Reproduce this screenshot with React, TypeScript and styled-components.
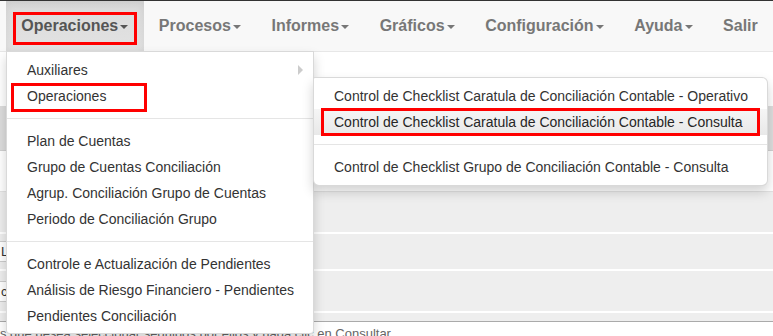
import React from "react";
import styled, { createGlobalStyle, css } from "styled-components";

const GlobalStyle = createGlobalStyle`
  html, body { margin: 0; padding: 0; background: #fff; }
  body { font-family: "Liberation Sans", Arial, sans-serif; overflow: hidden; }
  * { box-sizing: border-box; }
  ul { margin: 0; padding: 0; list-style: none; }
`;

const Page = styled.div`
  position: relative;
  width: 773px;
  height: 336px;
  overflow: hidden;
`;

const Navbar = styled.nav`
  position: relative;
  z-index: 10;
  display: flex;
  height: 52px;
  padding-left: 6px;
  background: #f8f8f8;
  border-top: 1px solid #333;
  border-bottom: 1px solid #e7e7e7;
`;

const NavList = styled.ul`
  display: flex;
`;

const NavItem = styled.li`
  position: relative;
`;

const NavLink = styled.a<{ $active?: boolean }>`
  display: flex;
  align-items: center;
  height: 50px;
  padding: 0 15.3px;
  font-size: 16px;
  font-weight: bold;
  color: #777;
  text-decoration: none;
  white-space: nowrap;
  ${(p) =>
    p.$active &&
    css`
      color: #555;
      background: linear-gradient(to bottom, #dbdbdb 0%, #e2e2e2 100%);
      box-shadow: inset 0 3px 9px rgba(0, 0, 0, 0.075);
    `}
`;

const Caret = styled.span`
  display: inline-block;
  width: 0;
  height: 0;
  margin-left: 2px;
  margin-top: 2px;
  border-top: 4px solid currentColor;
  border-left: 4px solid transparent;
  border-right: 4px solid transparent;
`;

const RedBox = styled.span<{ $l: number; $t: number; $w: number; $h: number }>`
  position: absolute;
  left: ${(p) => p.$l}px;
  top: ${(p) => p.$t}px;
  width: ${(p) => p.$w}px;
  height: ${(p) => p.$h}px;
  border: 3px solid #f00;
  pointer-events: none;
  z-index: 5;
`;

const Menu = styled.ul`
  position: absolute;
  top: 100%;
  left: 0;
  width: 308px;
  padding: 5px 0 4px;
  background: #fff;
  border: 1px solid rgba(0, 0, 0, 0.15);
  border-radius: 0 0 4px 4px;
  box-shadow: 0 6px 12px rgba(0, 0, 0, 0.175);
`;

const SubMenu = styled.ul`
  position: absolute;
  top: -6px;
  left: 100%;
  width: 455px;
  padding: 5px 0;
  background: #fff;
  border: 1px solid rgba(0, 0, 0, 0.15);
  border-radius: 2px 6px 6px 6px;
  box-shadow: 0 6px 12px rgba(0, 0, 0, 0.175);
`;

const MenuItem = styled.li`
  position: relative;
`;

const MenuLink = styled.a<{ $hl?: boolean }>`
  display: flex;
  align-items: center;
  justify-content: space-between;
  padding: 3px 20px;
  line-height: 20px;
  font-size: 14px;
  color: #333;
  white-space: nowrap;
  text-decoration: none;
  ${(p) =>
    p.$hl &&
    css`
      background: linear-gradient(to bottom, #f5f5f5 0%, #e8e8e8 100%);
      color: #262626;
    `}
`;

const SubArrow = styled.span<{ $hidden?: boolean }>`
  width: 0;
  height: 0;
  margin-right: -10px;
  border-top: 5px solid transparent;
  border-bottom: 5px solid transparent;
  border-left: 5px solid ${(p) => (p.$hidden ? "#fff" : "#ccc")};
`;

const Divider = styled.li`
  height: 1px;
  margin: 9px 0;
  background: #e5e5e5;
`;

const Content = styled.main`
  display: flex;
  flex-direction: column;
`;

const Blank = styled.div<{ $h: number }>`
  height: ${(p) => p.$h}px;
  background: #fff;
`;

const Band = styled.div`
  height: 45px;
  background: #dddddd;
  border-bottom: 1px solid #d0d0d0;
`;

const Rows = styled.div`
  display: flex;
  flex-direction: column;
  gap: 2px;
  border-top: 1px solid #e2e2e2;
  border-bottom: 1px solid #aaa;
`;

const Row = styled.div<{ $h: number }>`
  display: flex;
  align-items: center;
  height: ${(p) => p.$h}px;
  background: #eeeeee;
  font-size: 13px;
  color: #333;
`;

const Cell = styled.span`
  display: inline-block;
  width: 12px;
  overflow: hidden;
  padding: 2px 0 2px 1px;
  background: #fff;
  border: 1px solid #ccc;
  border-left: 0;
`;

const Footer = styled.p`
  margin: 3px 0 0;
  font-size: 13px;
  line-height: 18px;
  color: #666;
  white-space: nowrap;
`;

const navItems = ["Procesos", "Informes", "Gráficos", "Configuración", "Ayuda"];

const group1 = [
  "Plan de Cuentas",
  "Grupo de Cuentas Conciliación",
  "Agrup. Conciliación Grupo de Cuentas",
  "Periodo de Conciliación Grupo",
];

const group2 = [
  "Controle e Actualización de Pendientes",
  "Análisis de Riesgo Financiero - Pendientes",
  "Pendientes Conciliación",
];

export default function App() {
  return (
    <Page>
      <GlobalStyle />
      <Navbar>
        <NavList>
          <NavItem>
            <NavLink $active>
              Operaciones
              <Caret />
            </NavLink>
            <RedBox $l={7} $t={11} $w={124} $h={33} />
            <Menu>
              <MenuItem>
                <MenuLink>
                  Auxiliares
                  <SubArrow />
                </MenuLink>
              </MenuItem>
              <MenuItem>
                <MenuLink>
                  Operaciones
                  <SubArrow $hidden />
                </MenuLink>
                <RedBox $l={4} $t={0} $w={136} $h={29} />
                <SubMenu>
                  <MenuItem>
                    <MenuLink>Control de Checklist Caratula de Conciliación Contable - Operativo</MenuLink>
                  </MenuItem>
                  <MenuItem>
                    <MenuLink $hl>Control de Checklist Caratula de Conciliación Contable - Consulta</MenuLink>
                    <RedBox $l={7} $t={-1} $w={439} $h={28} />
                  </MenuItem>
                  <Divider />
                  <MenuItem>
                    <MenuLink>Control de Checklist Grupo de Conciliación Contable - Consulta</MenuLink>
                  </MenuItem>
                </SubMenu>
              </MenuItem>
              <Divider />
              {group1.map((t) => (
                <MenuItem key={t}>
                  <MenuLink>{t}</MenuLink>
                </MenuItem>
              ))}
              <Divider />
              {group2.map((t) => (
                <MenuItem key={t}>
                  <MenuLink>{t}</MenuLink>
                </MenuItem>
              ))}
            </Menu>
          </NavItem>
          {navItems.map((t) => (
            <NavItem key={t}>
              <NavLink>
                {t}
                <Caret />
              </NavLink>
            </NavItem>
          ))}
          <NavItem>
            <NavLink>Salir</NavLink>
          </NavItem>
        </NavList>
      </Navbar>
      <Content>
        <Blank $h={54} />
        <Band />
        <Blank $h={40} />
        <Rows>
          <Row $h={40} />
          <Row $h={35}>
            <Cell>L</Cell>
          </Row>
          <Row $h={40}>
            <Cell>có</Cell>
          </Row>
          <Row $h={8} />
        </Rows>
        <Footer>s que desea seleccionar seguidos por ellos y haga clic en Consultar</Footer>
      </Content>
    </Page>
  );
}
